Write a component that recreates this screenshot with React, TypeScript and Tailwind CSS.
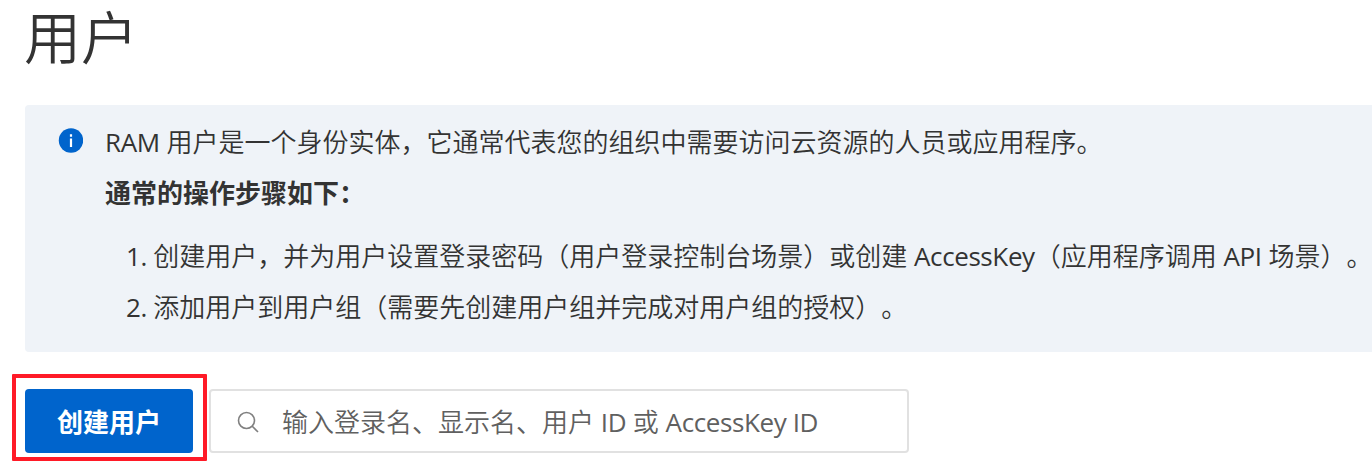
import type { ReactNode } from "react";

function Latin({ children }: { children: ReactNode }) {
  return <span className="font-normal tracking-[-0.4px]">{children}</span>;
}

export default function App() {
  return (
    <main className="flex h-[464px] w-[1372px] flex-col bg-white font-['Open_Sans','Noto_Sans_CJK_SC',sans-serif] text-[26px] text-[#333] [text-spacing-trim:space-all]">
      <h1 className="h-[105px] shrink-0 pl-[24px] text-[57px] font-[350] leading-[74px]">用户</h1>
      <section className="ml-[25px] flex h-[247px] shrink-0 rounded-l-[4px] bg-[#eff3f8] pl-[33px] pt-[12px]">
        <svg className="mt-[11px] mr-[22px] size-[25px] shrink-0" viewBox="0 0 25 25">
          <circle cx="13" cy="12.5" r="12.2" fill="#0064cc" />
          <path d="M13 10.5v8.5M13 6.2v2.6" stroke="#fff" strokeWidth="2.2" />
        </svg>
        <div className="whitespace-nowrap font-[350] leading-[51px]">
          <p><Latin>RAM</Latin> 用户是一个身份实体，它通常代表您的组织中需要访问云资源的人员或应用程序。</p>
          <p className="font-bold">通常的操作步骤如下：</p>
          <ol className="mt-[12px] pl-[21px]">
            <li><Latin>1. </Latin>创建用户，并为用户设置登录密码（用户登录控制台场景）或创建 <Latin>AccessKey</Latin>（应用程序调用 <Latin>API</Latin> 场景）。</li>
            <li><Latin>2. </Latin>添加用户到用户组（需要先创建用户组并完成对用户组的授权）。</li>
          </ol>
        </div>
      </section>
      <div className="mt-[22px] ml-[12px] flex h-[87px] shrink-0">
        <div className="h-[87px] w-[195px] rounded-[1px] border-4 border-[#ff1a27] pl-[9px] pt-[11px]">
          <button className="block h-[64px] w-[168px] rounded-[4px] bg-[#0064cc] pt-[2px] text-[26px] font-bold text-white">创建用户</button>
        </div>
        <label className="mt-[15px] ml-[2px] flex h-[64px] w-[700px] items-center whitespace-nowrap rounded-[4px] border-2 border-[#e1e1e1] pl-[26px] text-[#606060]">
          <svg className="mr-[23px] mt-[2px] size-[22px]" viewBox="0 0 22 22" fill="none" stroke="#808080" strokeWidth="1.6"><circle cx="9.5" cy="9.5" r="8" /><path d="m15 15 6 6" /></svg>
          <span className="pt-[2px] font-[350]">输入登录名、显示名、用户 <Latin>ID</Latin> 或 <Latin>AccessKey ID</Latin></span>
        </label>
      </div>
    </main>
  );
}
